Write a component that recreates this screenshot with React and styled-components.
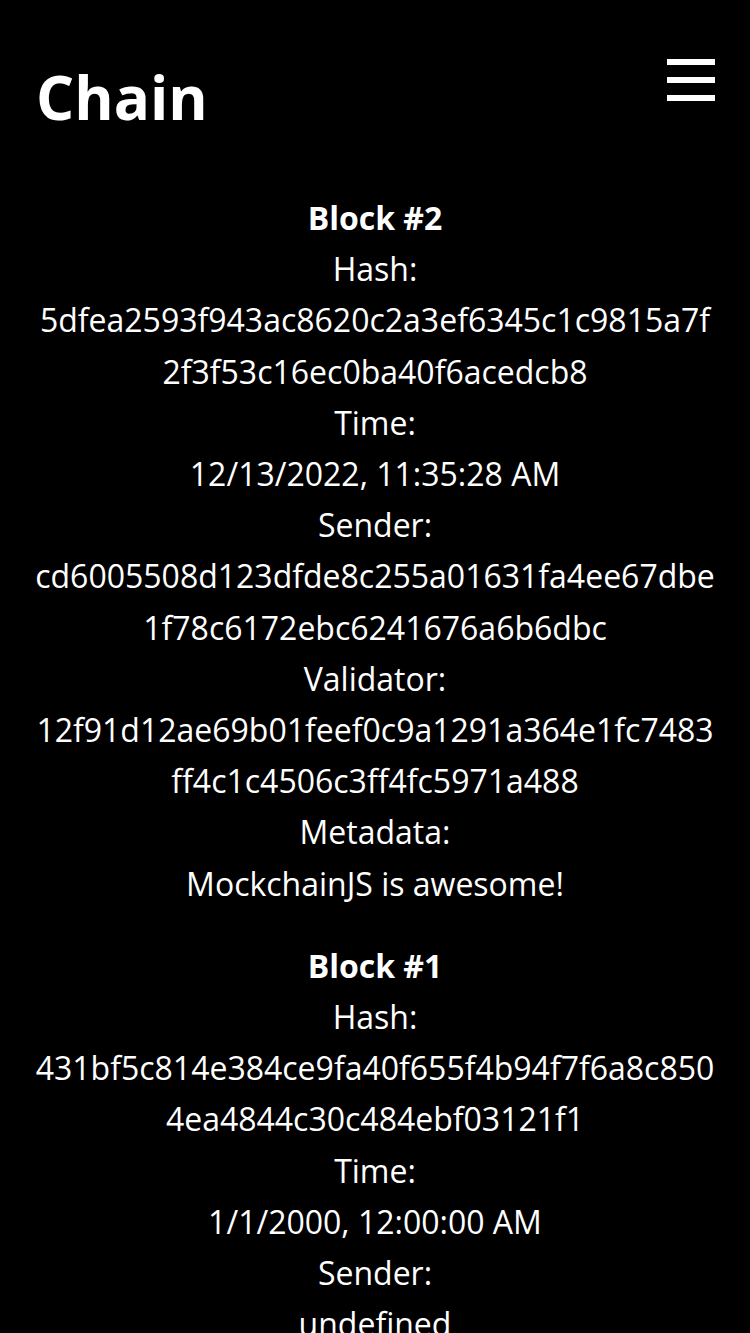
import React from 'react'
import styled, { createGlobalStyle } from 'styled-components'

const GlobalStyle = createGlobalStyle`
  body {
    margin: 0;
    background: #000;
    color: #fff;
    font-family: "Open Sans", "Liberation Sans", sans-serif;
  }
`

const blocks = [
  {
    index: 2,
    hash: '5dfea2593f943ac8620c2a3ef6345c1c9815a7f2f3f53c16ec0ba40f6acedcb8',
    time: '12/13/2022, 11:35:28 AM',
    sender: 'cd6005508d123dfde8c255a01631fa4ee67dbe1f78c6172ebc6241676a6b6dbc',
    validator: '12f91d12ae69b01feef0c9a1291a364e1fc7483ff4c1c4506c3ff4fc5971a488',
    metadata: 'MockchainJS is awesome!'
  },
  {
    index: 1,
    hash: '431bf5c814e384ce9fa40f655f4b94f7f6a8c8504ea4844c30c484ebf03121f1',
    time: '1/1/2000, 12:00:00 AM',
    sender: 'undefined',
    validator: 'undefined',
    metadata: 'Genesis block'
  }
]

export default class App extends React.PureComponent {
  render () {
    return (
      <Page>
        <GlobalStyle />
        <Header>
          <Title>Chain</Title>
          <Menu aria-label='menu'>
            <Bar />
            <Bar />
            <Bar />
          </Menu>
        </Header>
        <List>
          {blocks.map(block => (
            <Block key={block.index}>
              <BlockTitle>Block #{block.index}</BlockTitle>
              <Line>Hash:</Line>
              <Value>{block.hash}</Value>
              <Line>Time:</Line>
              <Value>{block.time}</Value>
              <Line>Sender:</Line>
              <Value>{block.sender}</Value>
              <Line>Validator:</Line>
              <Value>{block.validator}</Value>
              <Line>Metadata:</Line>
              <Value>{block.metadata}</Value>
            </Block>
          ))}
        </List>
      </Page>
    )
  }
}

const Page = styled.div`
  height: 100vh;
  overflow: hidden;
`

const Header = styled.header`
  display: flex;
  justify-content: space-between;
  align-items: flex-start;
  padding: 59px 35px 0 36px;
`

const Title = styled.h1`
  margin: 0;
  margin-top: -2px;
  font-size: 60px;
  font-weight: 700;
  line-height: 80px;
`

const Menu = styled.div`
  display: flex;
  flex-direction: column;
  gap: 12px;
  width: 48px;
  cursor: pointer;
`

const Bar = styled.span`
  display: block;
  height: 6px;
  background: #fff;
`

const List = styled.main`
  display: flex;
  flex-direction: column;
  gap: 31px;
  padding: 55px 33px 0;
  text-align: center;
`

const Block = styled.section`
  font-size: 32px;
  line-height: 51.2px;
`

const BlockTitle = styled.div`
  font-weight: 700;
`

const Line = styled.div``

const Value = styled.div`
  word-break: break-all;
`
